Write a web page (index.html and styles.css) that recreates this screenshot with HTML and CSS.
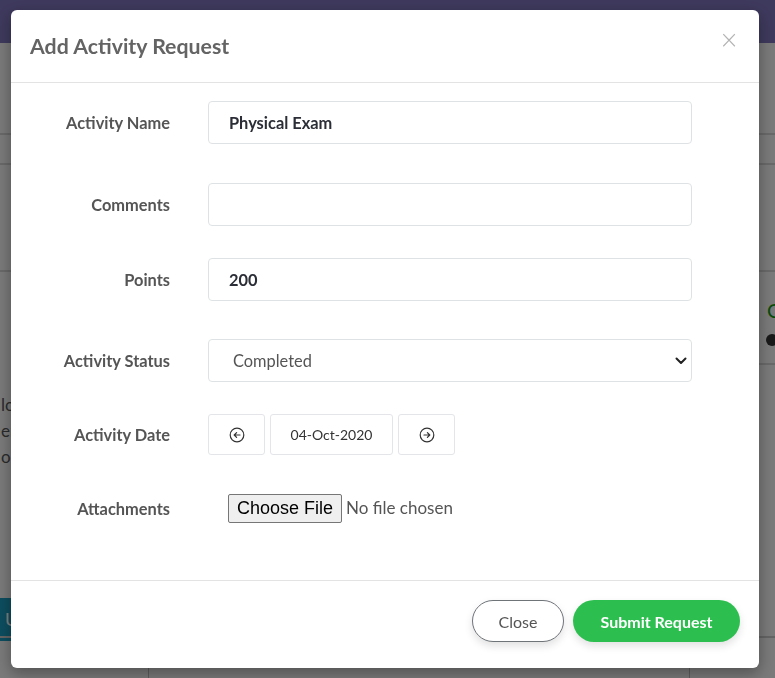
FILE: index.html
```html
<!DOCTYPE html>
<html lang="en">
<head>
    <meta charset="UTF-8">
    <meta name="viewport" content="width=device-width, initial-scale=1.0">
    <title>Add Activity Request</title>
    <link rel="stylesheet" href="styles.css">
</head>
<body>

<!-- halaman di belakang modal -->
<div class="page">
    <div class="topnav"></div>
    <div class="band band-a"></div>
    <div class="band band-b"></div>
    <div class="page-main">
        <div class="side-left">
            <p>lo</p>
            <p>er</p>
            <p>o</p>
            <span class="side-btn">U</span>
        </div>
        <div class="center-col"></div>
        <div class="side-right">
            <span class="side-title">C</span>
            <span class="side-dot"></span>
        </div>
    </div>
    <div class="page-bottom">
        <div class="pb-left"></div>
        <div class="pb-mid"><span class="pb-icon"></span>Social Care Services</div>
        <div class="pb-right"></div>
    </div>
</div>

<div class="backdrop"></div>

<div class="modal">
    <div class="modal-header">
        <h2>Add Activity Request</h2>
        <span class="modal-close">&times;</span>
    </div>

    <div class="modal-body">
        <div class="form-row first">
            <label>Activity Name</label>
            <input type="text" class="form-control" value="Physical Exam">
        </div>
        <div class="form-row">
            <label>Comments</label>
            <input type="text" class="form-control" value="">
        </div>
        <div class="form-row spaced">
            <label>Points</label>
            <input type="text" class="form-control" value="200">
        </div>
        <div class="form-row">
            <label>Activity Status</label>
            <div class="select-wrap">
                <select class="form-select">
                    <option>Completed</option>
                    <option>Pending</option>
                </select>
                <svg class="chevron" width="12" height="8" viewBox="0 0 12 8"><path d="M1.5 1.5 6 6l4.5-4.5" fill="none" stroke="#222" stroke-width="2" stroke-linecap="round" stroke-linejoin="round"/></svg>
            </div>
        </div>
        <div class="form-row spaced date-row">
            <label>Activity Date</label>
            <div class="date-picker">
                <button class="date-btn" type="button">
                    <svg width="16" height="16" viewBox="0 0 16 16"><circle cx="8" cy="8" r="6.8" fill="none" stroke="#333" stroke-width="1.2"/><path d="M11 8H5.3M7.6 5.6 5.2 8l2.4 2.4" fill="none" stroke="#333" stroke-width="1.2" stroke-linecap="round" stroke-linejoin="round"/></svg>
                </button>
                <div class="date-value">04-Oct-2020</div>
                <button class="date-btn" type="button">
                    <svg width="16" height="16" viewBox="0 0 16 16"><circle cx="8" cy="8" r="6.8" fill="none" stroke="#333" stroke-width="1.2"/><path d="M5 8h5.7M8.4 5.6 10.8 8l-2.4 2.4" fill="none" stroke="#333" stroke-width="1.2" stroke-linecap="round" stroke-linejoin="round"/></svg>
                </button>
            </div>
        </div>
        <div class="form-row file-row">
            <label>Attachments</label>
            <input type="file" class="file-input">
        </div>
    </div>

    <div class="modal-footer">
        <button class="btn btn-close" type="button">Close</button>
        <button class="btn btn-submit" type="button">Submit Request</button>
    </div>
</div>

</body>
</html>
```

FILE: styles.css
```css
body {
    font-family: 'Lato', 'Noto Sans', sans-serif;
    margin: 0;
    padding: 0;
    overflow: hidden;
    background-color: #f4f4f4;
}

/* halaman belakang */
.page {
    height: 678px;
    display: flex;
    flex-direction: column;
}
.topnav {
    height: 43px;
    background-color: #7d74bb;
}
.band {
    border-bottom: 2px solid #d2d2d2;
}
.band-a {
    height: 90px;
}
.band-b {
    height: 28px;
}
.page-main {
    flex: 1;
    display: flex;
    align-items: flex-start;
    border-top: 2px solid #d2d2d2;
    margin-top: 105px;
}
.side-left {
    width: 148px;
    padding-top: 120px;
    color: #555;
    font-size: 17px;
}
.side-left p {
    margin: 0;
    line-height: 26px;
    padding-left: 1px;
}
.side-btn {
    display: block;
    margin-top: 128px;
    width: 40px;
    height: 43px;
    background-color: #1a9bbd;
    color: #fff;
    font-size: 18px;
    line-height: 43px;
    padding-left: 5px;
}
.center-col {
    flex: 1;
}
.side-right {
    width: 8px;
    height: 65px;
    padding: 26px 0 0 16px;
    border-bottom: 2px solid #d2d2d2;
}
.side-title {
    display: block;
    color: #149614;
    font-size: 20px;
}
.side-dot {
    display: block;
    width: 12px;
    height: 12px;
    border-radius: 50%;
    background-color: #333;
    margin: 12px 0 0 -1px;
}
.page-bottom {
    height: 40px;
    display: flex;
    border-top: 2px solid #c8c8c8;
    margin-top: -30px;
}
.pb-left {
    width: 148px;
    border-right: 1px solid #bbb;
}
.pb-mid {
    flex: 1;
    color: #117a5e;
    font-size: 18px;
    padding: 2px 0 0 70px;
}
.pb-icon {
    display: inline-block;
    width: 14px;
    height: 14px;
    border: 3px solid #117a5e;
    border-radius: 50%;
    margin-right: 45px;
}
.pb-right {
    width: 85px;
    border-left: 1px solid #bbb;
}
.backdrop {
    position: fixed;
    inset: 0;
    background-color: rgba(0, 0, 0, 0.5);
}

/* modal */
.modal {
    position: fixed;
    left: 11px;
    top: 10px;
    width: 748px;
    background-color: #fff;
    border-radius: 6px;
    box-shadow: 0 5px 15px rgba(0, 0, 0, 0.35);
}
.modal-header {
    height: 72px;
    display: flex;
    align-items: center;
    justify-content: space-between;
    padding: 0 20px 0 19px;
    border-bottom: 1px solid #e3e3e3;
}
.modal-header h2 {
    margin: 0;
    font-size: 21.3px;
    font-weight: 700;
    color: #646464;
}
.modal-close {
    font-size: 24px;
    color: #b4b4b4;
    font-family: 'DejaVu Sans', sans-serif;
    font-weight: 300;
    margin-top: -12px;
}
.modal-body {
    padding: 18px 67px 57px 19px;
}
.form-row {
    display: flex;
    align-items: center;
    margin-bottom: 32px;
}
.form-row.first {
    margin-bottom: 39px;
}
.form-row.spaced {
    margin-bottom: 38px;
}
.form-row:last-child {
    margin-bottom: 0;
}
.form-row label {
    width: 140px;
    text-align: right;
    margin-right: 38px;
    font-size: 16.4px;
    font-weight: 700;
    color: #555;
}
.form-control {
    width: 484px;
    height: 43px;
    box-sizing: border-box;
    border: 1px solid #dfe2e5;
    border-radius: 4px;
    padding: 0 20px;
    font-family: inherit;
    font-size: 16.4px;
    font-weight: 700;
    color: #2b2e36;
}
.select-wrap {
    position: relative;
}
.form-select {
    width: 484px;
    height: 43px;
    box-sizing: border-box;
    border: 1px solid #dfe2e5;
    border-radius: 4px;
    padding: 0 24px;
    font-family: inherit;
    font-size: 16.4px;
    color: #555;
    background-color: #fff;
    appearance: none;
}
.chevron {
    position: absolute;
    right: 5px;
    top: 18px;
}
.date-picker {
    display: flex;
    gap: 5px;
}
.date-btn {
    width: 57px;
    height: 41px;
    background-color: #fff;
    border: 1px solid #e3e5e8;
    border-radius: 3px;
    display: flex;
    align-items: center;
    justify-content: center;
    padding: 0;
}
.date-value {
    width: 123px;
    height: 41px;
    box-sizing: border-box;
    border: 1px solid #e3e5e8;
    border-radius: 3px;
    display: flex;
    align-items: center;
    justify-content: center;
    font-size: 14px;
    color: #333;
}
.date-row {
    height: 41px;
}
.file-row {
    height: 30px;
}
.file-input {
    margin-left: 20px;
    font-family: 'Lato', sans-serif;
    font-size: 17px;
    color: #555;
}
.file-input::file-selector-button {
    font-family: 'Liberation Sans', Arial, sans-serif;
    font-size: 18px;
    color: #000;
    background-color: #efefef;
    border: 1px solid #767676;
    border-radius: 2px;
    padding: 3px 8px;
    margin-right: 4px;
}
.modal-footer {
    border-top: 1px solid #e3e3e3;
    padding: 19px 19px 26px;
    display: flex;
    justify-content: flex-end;
    gap: 9px;
}
.btn {
    height: 42px;
    border-radius: 21px;
    font-family: inherit;
    font-size: 16px;
    cursor: pointer;
    box-shadow: 0 4px 8px rgba(0, 0, 0, 0.12);
}
.btn-close {
    width: 92px;
    background-color: #fff;
    border: 1px solid #6f7479;
    color: #555;
}
.btn-submit {
    width: 167px;
    background-color: #2cbf4f;
    border: none;
    color: #fff;
    font-weight: 700;
}
```
